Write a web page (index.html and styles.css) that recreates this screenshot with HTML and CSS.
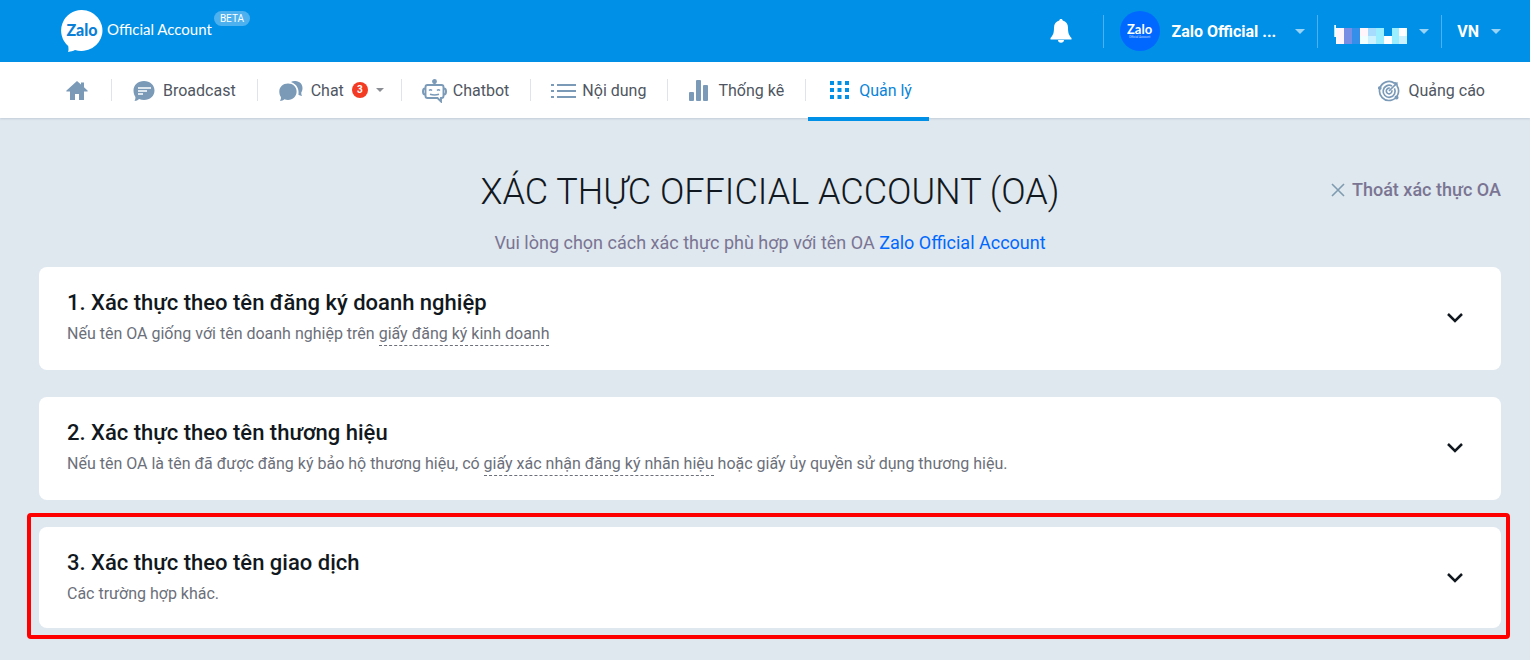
FILE: index.html
```html
<!DOCTYPE html>
<html lang="vi">
<head>
    <meta charset="UTF-8">
    <meta name="viewport" content="width=device-width, initial-scale=1.0">
    <title>Xác thực Official Account</title>
    <link rel="stylesheet" href="styles.css">
</head>
<body>
    <header class="topbar">
        <a href="#" class="brand">
            <svg class="brand-logo" width="42" height="42" viewBox="0 0 42 42">
                <path fill="#fff" d="M21 0a21 20.500 0 1 1-7 40c-2 1-4 1.500-7 2 .8-2 .5-4 .2-6A20.500 20.500 0 0 1 21 0z"/>
                <text x="21" y="26" text-anchor="middle">Zalo</text>
            </svg>
            <span class="brand-name">Official Account</span>
            <span class="beta">BETA</span>
        </a>

        <div class="topbar-right">
            <button type="button" class="bell" aria-label="Thông báo">
                <svg width="22" height="26" viewBox="0 0 22 26">
                    <path fill="#fff" d="M11 1c1 0 1.700.7 1.700 1.600C16 3.400 18 6 18 9.500c0 5.500.8 7.500 3.500 10.500v1.500H.5V20C3.200 17 4 15 4 9.500 4 6 6 3.400 9.300 2.600 9.300 1.700 10 1 11 1zM8 22h6c0 1.700-1.300 2.700-3 2.700S8 23.700 8 22z"/>
                </svg>
            </button>
            <button type="button" class="menu account">
                <span class="avatar">
                    <span class="avatar-name">Zalo</span>
                    <span class="avatar-sub">Official Account</span>
                </span>
                <span class="account-name">Zalo Official ...</span>
                <i class="caret"></i>
            </button>
            <button type="button" class="menu user" aria-label="Tài khoản">
                <svg width="73" height="20" viewBox="0 0 73 20" shape-rendering="crispEdges">
                    <path fill="#9aeeff" d="M0 1h1v12H0z"/>
                    <path fill="#fff" d="M1 1h1v12H1zM65 4h8v8h-8zM50 12h8v8h-8z"/>
                    <path fill="#fff5fa" d="M2 4h8v16H2zM26 4h8v8h-8z"/>
                    <path fill="#778ee4" d="M10 4h8v16h-8z"/>
                    <path fill="#348fea" d="M18 4h8v16h-8z"/>
                    <path fill="#f0ffff" d="M26 12h8v8h-8z"/>
                    <path fill="#a8dcff" d="M34 4h8v8h-8z"/>
                    <path fill="#cdf2ff" d="M34 12h8v8h-8zM65 12h8v8h-8z"/>
                    <path fill="#9aeeff" d="M42 4h8v16h-8zM58 4h7v16h-7z"/>
                </svg>
                <i class="caret"></i>
            </button>
            <button type="button" class="menu lang">VN <i class="caret"></i></button>
        </div>
    </header>

    <nav class="nav">
        <a href="#" class="nav-item home" aria-label="Trang chủ">
            <svg width="22" height="22" viewBox="0 0 22 22">
                <path fill="#7a9ab8" d="M11 1l4 3.500V2.500h3v4.700l3.500 3.300c.4.500.2 1-.4 1H18V20h-5v-6H9v6H4v-8.500H.9c-.6 0-.8-.5-.4-1z"/>
            </svg>
        </a>
        <a href="#" class="nav-item">
            <svg width="22" height="22" viewBox="0 0 22 22">
                <path fill="#7a9ab8" d="M11 1c6 0 10.500 4 10.500 9.500S17 20 11 20c-1.800 0-3.400-.3-4.900-1-1.300 1.300-2.700 1.900-4.600 2 .8-1.500 1-2.700.9-4C1.200 15.200.500 13 .500 10.500.500 5 5 1 11 1z"/>
                <path stroke="#fff" stroke-width="1.300" d="M5 8h13M5 11h9M5 14h5"/>
            </svg>
            Broadcast
        </a>
        <a href="#" class="nav-item chat">
            <svg width="24" height="22" viewBox="0 0 24 22">
                <path fill="#7a9ab8" d="M12 2C13.500 1 15 .8 16.500 1c4 .3 7 3 7 7 0 2-.6 3.500-1.300 4.700 0 1.200.3 2.200.9 3.200-1.500-.1-2.700-.5-3.700-1.100 1-5-1.400-10.800-7.400-12.800z"/>
                <path fill="#7a9ab8" d="M9 3.500c5 0 8.600 3.300 8.600 8.100S14 20 9 20c-1.300 0-2.500-.2-3.600-.7-1.100 1-2.600 1.600-4.500 1.700.9-1.300 1.200-2.500 1-3.900C.8 15.600.300 13.600.300 11.600.300 6.800 4 3.500 9 3.500z"/>
            </svg>
            Chat
            <span class="badge">3</span>
            <i class="caret"></i>
        </a>
        <a href="#" class="nav-item tight">
            <svg width="25" height="24" viewBox="0 0 25 24" fill="none" stroke="#7a9ab8" stroke-width="1.900">
                <circle cx="12.500" cy="2.500" r="1.500" fill="#7a9ab8"/>
                <path d="M12.500 3v3M3.500 8q0-2 2-2h14q2 0 2 2v9q0 2-2 2H19v3.500L15.500 19h-10q-2 0-2-2z"/>
                <path d="M3 9.500Q1 9.500 1 12.500t2 3M22 9.500q2 0 2 3t-2 3" stroke-width="2"/>
                <path d="M7 11.500q1.500-1.700 3 0M15 11.500q1.500-1.700 3 0M8 15.300q4.500 1.500 9 0" stroke-width="1.500"/>
            </svg>
            Chatbot
        </a>
        <a href="#" class="nav-item tight">
            <svg width="25" height="22" viewBox="0 0 25 22" stroke="#7a9ab8" stroke-width="2">
                <path d="M6 5h19M6 11h19M6 17h19M0 5h3M0 11h3M0 17h3"/>
            </svg>
            Nội dung
        </a>
        <a href="#" class="nav-item">
            <svg width="21" height="22" viewBox="0 0 21 22" fill="#7a9ab8">
                <rect x="0" y="12" width="5" height="9" rx="1"/>
                <rect x="7" y="0" width="5" height="21" rx="1"/>
                <rect x="14" y="5" width="5" height="16" rx="1"/>
            </svg>
            Thống kê
        </a>
        <a href="#" class="nav-item active">
            <svg width="22" height="22" viewBox="0 0 22 22" fill="none" stroke="#0190e8" stroke-width="4">
                <path stroke-dasharray="4 3.500" d="M1 3h20M1 10h20M1 17h20"/>
            </svg>
            Quản lý
        </a>
        <a href="#" class="nav-item ads">
            <svg width="22" height="22" viewBox="0 0 22 22" fill="none" stroke="#7a9ab8" stroke-width="1.700">
                <path d="M16.500 3.200A9.500 9.500 0 1 0 19 5.800"/>
                <path d="M11 11l8.500-8.500M17 2v3h3"/>
                <path d="M14 6a6 6 0 1 0 2.400 2.400"/>
                <path d="M11.800 8.300a2.800 2.800 0 1 0 2 2"/>
                <circle cx="18.500" cy="17.500" r="1.200" fill="#7a9ab8"/>
                <circle cx="1.800" cy="8" r="1" fill="#7a9ab8"/>
            </svg>
            Quảng cáo
        </a>
    </nav>

    <main class="content">
        <div class="heading">
            <h1>XÁC THỰC OFFICIAL ACCOUNT (OA)</h1>
            <p>Vui lòng chọn cách xác thực phù hợp với tên OA <a href="#">Zalo Official Account</a></p>
            <a href="#" class="exit">
                <svg width="16" height="16" viewBox="0 0 16 16"><path stroke="#7f9bb0" stroke-width="1.600" d="M2 2l12 12M14 2L2 14"/></svg>
                Thoát xác thực OA
            </a>
        </div>

        <section class="card">
            <div>
                <h2>1. Xác thực theo tên đăng ký doanh nghiệp</h2>
                <p>Nếu tên OA giống với tên doanh nghiệp trên <a href="#">giấy đăng ký kinh doanh</a></p>
            </div>
            <button type="button" class="toggle" aria-label="Mở rộng">
                <svg width="18" height="12" viewBox="0 0 18 12"><path d="M2 2l7 7 7-7"/></svg>
            </button>
        </section>

        <section class="card">
            <div>
                <h2>2. Xác thực theo tên thương hiệu</h2>
                <p>Nếu tên OA là tên đã được đăng ký bảo hộ thương hiệu, có <a href="#">giấy xác nhận đăng ký nhãn hiệu</a> hoặc giấy ủy quyền sử dụng thương hiệu.</p>
            </div>
            <button type="button" class="toggle" aria-label="Mở rộng">
                <svg width="18" height="12" viewBox="0 0 18 12"><path d="M2 2l7 7 7-7"/></svg>
            </button>
        </section>

        <section class="card highlight">
            <div>
                <h2>3. Xác thực theo tên giao dịch</h2>
                <p>Các trường hợp khác.</p>
            </div>
            <button type="button" class="toggle" aria-label="Mở rộng">
                <svg width="18" height="12" viewBox="0 0 18 12"><path d="M2 2l7 7 7-7"/></svg>
            </button>
        </section>
    </main>
</body>
</html>
```
FILE: styles.css
```css
* {
    box-sizing: border-box;
}

body {
    margin: 0;
    min-height: 100vh;
    background-color: #dfe7ef;
    font-family: Roboto, "Liberation Sans", sans-serif;
    font-size: 16px;
    color: #4f5661;
}

a {
    color: inherit;
    text-decoration: none;
}

button {
    border: none;
    padding: 0;
    background: none;
    font: inherit;
    color: inherit;
    cursor: pointer;
}

svg {
    display: block;
    flex: none;
}

.caret {
    flex: none;
    border: 5px solid transparent;
    border-top-color: #99d3f6;
    border-bottom: none;
}

/* Top bar */
.topbar {
    display: flex;
    align-items: center;
    justify-content: space-between;
    height: 62px;
    padding: 0 29px 0 61px;
    background-color: #0190e8;
    color: #fff;
}

.brand {
    display: flex;
    align-items: center;
}

.brand-logo text {
    font: 900 16px Lato, sans-serif;
    fill: #0b7fd6;
}

.brand-name {
    margin-left: 4px;
    padding-bottom: 4px;
    font-family: Lato, sans-serif;
    font-size: 15px;
    white-space: nowrap;
}

.beta {
    align-self: flex-start;
    height: 15px;
    margin: 1px 0 0 2px;
    padding: 0 6px;
    border-radius: 8px;
    background-color: #4db1ef;
    font-size: 10px;
    line-height: 15px;
}

.topbar-right {
    display: flex;
    align-items: center;
}

.bell {
    margin-right: 31px;
}

.menu {
    display: flex;
    align-items: center;
    gap: 12px;
    height: 33px;
    padding: 0 12px 0 16px;
    border-left: 1px solid #4db1ef;
    font-weight: 700;
}

.avatar {
    display: flex;
    flex-direction: column;
    align-items: center;
    justify-content: center;
    width: 40px;
    height: 40px;
    border-radius: 50%;
    background-color: #0068ff;
}

.avatar-name {
    font: 700 13px/12px Lato, sans-serif;
}

.avatar-sub {
    font-size: 3px;
    font-weight: 400;
    line-height: 5px;
    opacity: 0.7;
}

.account-name {
    margin-right: 7px;
    white-space: nowrap;
}

.user svg {
    margin-top: 5px;
}

.lang {
    padding: 0 0 0 15px;
}

/* Navigation */
.nav {
    position: relative;
    display: flex;
    align-items: center;
    height: 56px;
    padding: 0 25px 0 45px;
    background-color: #fff;
    box-shadow: 0 1px 2px rgba(80, 100, 120, 0.2);
}

.nav-item {
    position: relative;
    display: flex;
    align-items: center;
    gap: 8px;
    height: 56px;
    padding: 0 21px 0 22px;
    white-space: nowrap;
}

.nav-item svg {
    margin-top: 2px;
}

.nav-item + .nav-item::before {
    content: "";
    position: absolute;
    left: 0;
    width: 1px;
    height: 22px;
    background-color: #dfe4ea;
}

.home {
    padding: 0 23px 0 21px;
}

.chat {
    padding-right: 17px;
}

.nav-item.tight {
    gap: 6px;
    padding-left: 21px;
}

.badge {
    width: 16px;
    height: 16px;
    border-radius: 8px;
    background-color: #f33a22;
    color: #fff;
    font-size: 10px;
    font-weight: 700;
    line-height: 16px;
    text-align: center;
}

.nav .caret {
    border-width: 4px;
    border-bottom: none;
    border-top-color: #8a8d93;
}

.nav-item.active {
    padding: 0 17px 0 24px;
    color: #0b84d8;
}

.active::after {
    content: "";
    position: absolute;
    left: 3px;
    right: 0;
    bottom: -3px;
    height: 4px;
    background-color: #0190e8;
}

.nav-item.ads {
    margin-left: auto;
    padding-right: 20px;
}

.nav .ads::before {
    display: none;
}

/* Content */
.content {
    padding: 50px 29px 32px 39px;
}

.heading {
    position: relative;
    text-align: center;
}

.heading h1 {
    margin: 0;
    color: #111820;
    font-size: 36px;
    font-weight: 300;
    line-height: 48px;
}

.heading p {
    margin: 0;
    padding: 15px 0 12px;
    color: #7a7592;
    font-size: 18px;
    line-height: 24px;
}

.heading p a {
    color: #0068ff;
}

.exit {
    position: absolute;
    top: 10px;
    right: 0;
    display: flex;
    align-items: center;
    gap: 6px;
    color: #7a7592;
    font-size: 18px;
    font-weight: 500;
    line-height: 24px;
}

.card {
    position: relative;
    display: flex;
    align-items: center;
    justify-content: space-between;
    margin-bottom: 27px;
    padding: 21px 37px 23px 28px;
    border-radius: 8px;
    background-color: #fff;
}

.card h2 {
    margin: 0;
    color: #111820;
    font-size: 22px;
    font-weight: 500;
    line-height: 30px;
}

.card p {
    margin: 3px 0 0;
    color: #6b6f7a;
    font-size: 16px;
    line-height: 26px;
}

.card p a {
    padding-bottom: 2px;
    border-bottom: 1px dashed #6b6f7a;
}

.toggle path {
    fill: none;
    stroke: #111820;
    stroke-width: 2.5;
}

.highlight {
    padding-bottom: 21px;
}

.highlight::after {
    content: "";
    position: absolute;
    inset: -14px -9px -11px -12px;
    border: 4px solid #fe0000;
    border-radius: 4px;
    pointer-events: none;
}
```
